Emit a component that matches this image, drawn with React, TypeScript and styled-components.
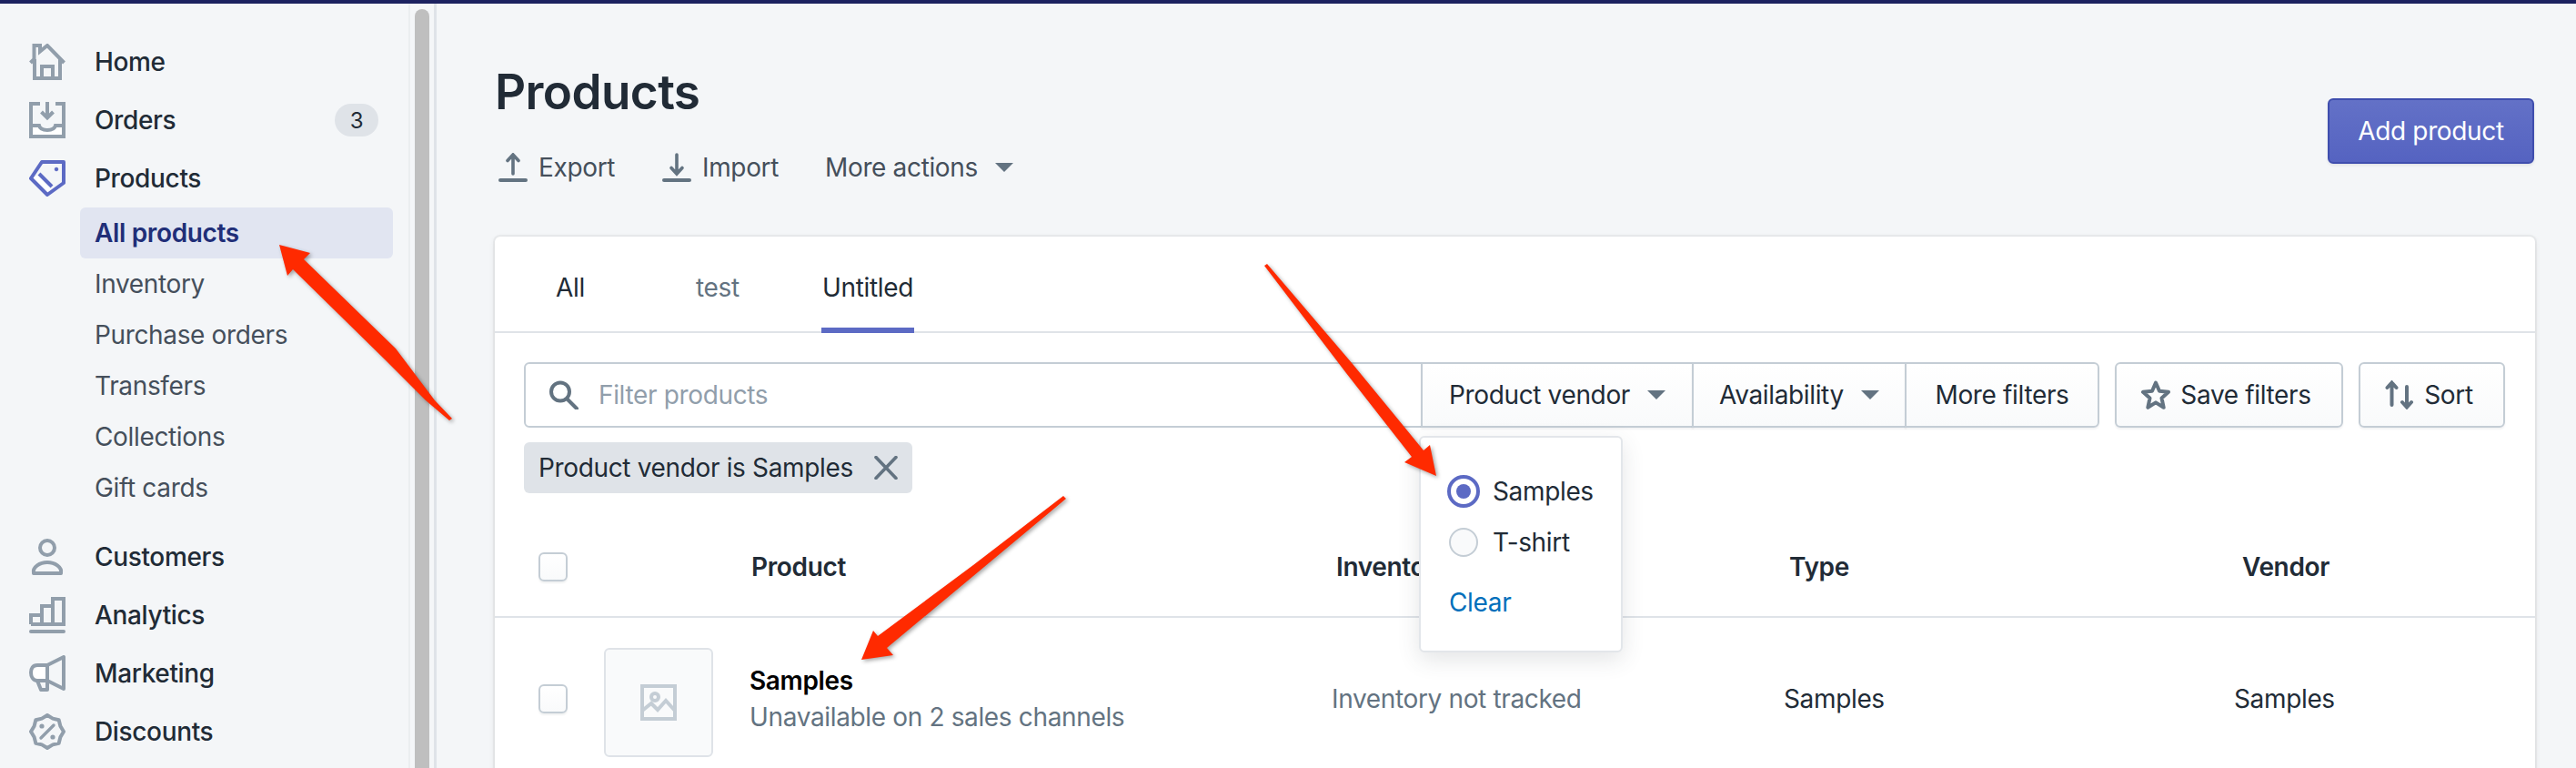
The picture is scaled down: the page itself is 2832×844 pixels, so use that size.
import React from 'react';
import styled, { createGlobalStyle } from 'styled-components';

const GlobalStyle = createGlobalStyle`
  html, body {
    margin: 0;
    padding: 0;
    background: #f4f6f8;
    font-family: 'Inter', 'Liberation Sans', sans-serif;
    font-size: 28px;
    letter-spacing: -0.35px;
    color: #212b36;
  }
`;

const Page = styled.div`
  position: relative;
  width: 2832px;
  height: 844px;
  overflow: hidden;
  border-top: 4px solid #1c2260;
  box-sizing: border-box;
  display: flex;
`;

const Sidebar = styled.aside`
  width: 480px;
  flex: none;
  display: flex;
  border-right: 3px solid #dfe3e8;
  box-sizing: border-box;
`;

const Nav = styled.nav`
  width: 451px;
  flex: none;
  box-sizing: border-box;
  padding: 32px 0 0 32px;
  border-right: 2px solid #ebeef0;
`;

const ScrollTrack = styled.div`
  margin: 6px 0 0 5px;
  width: 16px;
  flex: none;
  background: #bfbfbf;
  border-radius: 8px 8px 0 0;
`;

const NavGroup = styled.div<{ $gap?: number }>`
  margin-top: ${({ $gap }) => $gap ?? 0}px;
`;

const NavItem = styled.div`
  display: flex;
  align-items: center;
  height: 64px;
  width: 384px;
  font-weight: 500;
  svg {
    width: 40px;
    height: 40px;
    margin-right: 32px;
    flex: none;
  }
`;

const Badge = styled.span`
  margin-left: auto;
  width: 48px;
  height: 36px;
  border-radius: 18px;
  background: #dfe3e8;
  font-size: 24px;
  font-weight: 400;
  display: flex;
  align-items: center;
  justify-content: center;
`;

const SubItem = styled.div<{ $active?: boolean }>`
  display: flex;
  align-items: center;
  height: 56px;
  width: 344px;
  margin-left: 56px;
  padding-left: 16px;
  box-sizing: border-box;
  border-radius: 6px;
  color: ${({ $active }) => ($active ? '#202e78' : '#454f5b')};
  font-weight: ${({ $active }) => ($active ? 600 : 400)};
  background: ${({ $active }) => ($active ? '#e1e5f1' : 'transparent')};
`;

const Main = styled.main`
  flex: 1;
  min-width: 0;
  padding: 64px 45px 0 64px;
`;

const Header = styled.header`
  display: flex;
  justify-content: space-between;
  align-items: flex-start;
  height: 192px;
`;

const Title = styled.h1`
  margin: 1px 0 0;
  font-size: 53px;
  line-height: 64px;
  font-weight: 600;
  letter-spacing: -0.6px;
`;

const Toolbar = styled.div`
  display: flex;
  align-items: center;
  height: 40px;
  margin-top: 31px;
`;

const ToolAction = styled.div<{ $width: number }>`
  display: flex;
  align-items: center;
  width: ${({ $width }) => $width}px;
  color: #454f5b;
  svg.tool {
    width: 32px;
    height: 32px;
    margin: 0 12px 0 4px;
  }
  svg.caret {
    width: 20px;
    height: 10px;
    margin-left: 19px;
  }
`;

const PrimaryButton = styled.button`
  margin: 40px 1px 0 0;
  width: 227px;
  height: 72px;
  border: 2px solid #3f4eae;
  border-radius: 6px;
  background: linear-gradient(180deg, #6371c7, #5563c1);
  color: #fff;
  font-family: inherit;
  font-size: 28px;
  letter-spacing: -0.35px;
  box-shadow: 0 2px 3px rgba(22, 29, 37, 0.08);
`;

const Card = styled.section`
  background: #fff;
  border-radius: 6px 6px 0 0;
  height: 600px;
  box-shadow: 0 0 0 2px rgba(63, 63, 68, 0.05), 0 2px 6px rgba(63, 63, 68, 0.12);
`;

const Tabs = styled.div`
  display: flex;
  height: 106px;
  padding-left: 67px;
  border-bottom: 2px solid #dfe3e8;
  box-sizing: border-box;
`;

const Tab = styled.div<{ $active?: boolean; $color?: string; $width?: number }>`
  display: flex;
  align-items: center;
  box-sizing: border-box;
  height: 106px;
  padding: 11px ${({ $active }) => ($active ? '1px' : '0')} 0;
  width: ${({ $width }) => ($width ? `${$width}px` : 'auto')};
  color: ${({ $color }) => $color ?? '#212b36'};
  border-bottom: 6px solid ${({ $active }) => ($active ? '#5c6ac4' : 'transparent')};
`;

const FilterBar = styled.div`
  display: flex;
  gap: 17px;
  padding: 32px 33px 0 32px;
`;

const FilterGroup = styled.div`
  display: flex;
  flex: 1;
  height: 72px;
`;

const SearchField = styled.div`
  flex: 1;
  display: flex;
  align-items: center;
  padding-left: 26px;
  border: 2px solid #c4cdd5;
  border-radius: 6px 0 0 6px;
  color: #919eab;
  svg {
    width: 32px;
    height: 32px;
    margin-right: 22px;
  }
`;

const OutlineButton = styled.div<{ $grouped?: boolean; $last?: boolean; $width: number }>`
  position: relative;
  box-sizing: border-box;
  width: ${({ $width }) => $width}px;
  height: 72px;
  display: flex;
  align-items: center;
  justify-content: center;
  margin-left: ${({ $grouped }) => ($grouped ? '-2px' : '0')};
  padding-right: ${({ $grouped }) => ($grouped ? '0' : '6px')};
  border: 2px solid #c4cdd5;
  border-radius: ${({ $grouped, $last }) => ($grouped ? ($last ? '0 6px 6px 0' : '0') : '6px')};
  background: linear-gradient(180deg, #fff, #f9fafb);
  box-shadow: 0 2px 2px rgba(22, 29, 37, 0.05);
  svg.caret {
    width: 20px;
    height: 10px;
    margin-left: 19px;
  }
  svg.lead {
    width: 32px;
    height: 32px;
    margin-right: 11px;
  }
`;

const Popover = styled.div`
  position: absolute;
  z-index: 2;
  top: 79px;
  left: -4px;
  width: 224px;
  height: 238px;
  box-sizing: border-box;
  padding: 31px 0 0 29px;
  background: #fff;
  border: 2px solid #e3e6ea;
  border-radius: 6px;
  box-shadow: 0 8px 24px rgba(66, 71, 76, 0.14);
`;

const RadioRow = styled.div`
  display: flex;
  align-items: center;
  height: 56px;
  gap: 14px;
`;

const Radio = styled.span<{ $checked?: boolean }>`
  box-sizing: border-box;
  flex: none;
  width: ${({ $checked }) => ($checked ? 36 : 32)}px;
  height: ${({ $checked }) => ($checked ? 36 : 32)}px;
  margin: 0 ${({ $checked }) => ($checked ? 0 : 2)}px;
  border-radius: 50%;
  display: flex;
  align-items: center;
  justify-content: center;
  border: ${({ $checked }) => ($checked ? '4px solid #5c6ac4' : '2px solid #c4cdd5')};
  background: ${({ $checked }) => ($checked ? '#fff' : '#f9fafb')};
  &::after {
    content: '';
    width: 16px;
    height: 16px;
    border-radius: 50%;
    background: ${({ $checked }) => ($checked ? '#5c6ac4' : 'transparent')};
  }
`;

const ClearLink = styled.div`
  margin: 10px 0 0 2px;
  height: 56px;
  display: flex;
  align-items: center;
  color: #006fbb;
`;

const Chip = styled.div`
  display: inline-flex;
  align-items: center;
  height: 56px;
  margin: 16px 0 0 32px;
  padding: 0 16px;
  border-radius: 6px;
  background: #dfe3e8;
  svg {
    width: 26px;
    height: 26px;
    margin-left: 23px;
  }
`;

const Checkbox = styled.span`
  display: block;
  box-sizing: border-box;
  width: 32px;
  height: 32px;
  border: 2px solid #c4cdd5;
  border-radius: 6px;
  background: linear-gradient(180deg, #fff, #f9fafb);
  box-shadow: 0 2px 2px rgba(22, 29, 37, 0.06);
`;

const HeadRow = styled.div`
  display: grid;
  grid-template-columns: 234px 643px 498px 498px 1fr;
  align-items: center;
  box-sizing: border-box;
  height: 137px;
  padding: 26px 0 0 48px;
  border-bottom: 2px solid #dfe3e8;
  font-weight: 600;
`;

const BodyRow = styled.div`
  display: grid;
  grid-template-columns: 72px 160px 640px 497px 495px 1fr;
  grid-template-rows: 112px;
  align-items: center;
  padding: 33px 0 0 48px;
`;

const Thumb = styled.div`
  align-self: start;
  box-sizing: border-box;
  width: 120px;
  height: 120px;
  border: 2px solid #dfe3e8;
  border-radius: 6px;
  background: #f9fafb;
  display: flex;
  align-items: center;
  justify-content: center;
  svg {
    width: 40px;
    height: 40px;
  }
`;

const ProductName = styled.div`
  font-weight: 600;
  color: #000;
  line-height: 40px;
`;

const ProductNote = styled.div`
  color: #637381;
  line-height: 40px;
`;

const MutedCell = styled.div`
  color: #637381;
`;

const Annotations = styled.svg`
  position: absolute;
  z-index: 3;
  top: -4px;
  left: 0;
  width: 2832px;
  height: 844px;
  pointer-events: none;
  filter: drop-shadow(2px 2px 2px rgba(0, 0, 0, 0.35));
`;

const grey = '#919eab';
const slate = '#637381';

const scallop = (() => {
  const pts: string[] = [];
  for (let i = 0; i < 16; i++) {
    const r = i % 2 === 0 ? 18 : 15.6;
    const a = (i * Math.PI) / 8 - Math.PI / 2;
    pts.push(`${(20 + r * Math.cos(a)).toFixed(1)},${(20 + r * Math.sin(a)).toFixed(1)}`);
  }
  return pts.join(' ');
})();

const HomeIcon = () => (
  <svg viewBox="0 0 40 40" fill="none" stroke={grey} strokeWidth="4">
    <path d="M1.5 21 5.5 17V2H12V8.5L20 2 38.5 21" />
    <path d="M6 17V38H34V17" />
    <path d="M14 38V25H26V38" />
  </svg>
);

const OrdersIcon = () => (
  <svg viewBox="0 0 40 40" fill="none" stroke={grey} strokeWidth="4">
    <path d="M2 26H11C12 30 15 31 20 31S28 30 29 26H38V38H2Z" fill="#fff" />
    <path d="M12 2H2V38H38V2H29" />
    <path d="M20 0V17M13.5 11 20 17.5 26.5 11" />
  </svg>
);

const TagIcon = () => (
  <svg viewBox="0 0 40 40" fill="none" stroke="#5c6ac4" strokeWidth="4" strokeLinejoin="round">
    <path d="M2.5 20 11 16 25 30 20 37.5Z" fill="#fff" stroke="none" />
    <path d="M14 2H38V25L20 38 2 20Z" />
    <path d="M11 15 25 29" />
    <circle cx="30" cy="10" r="1.8" fill="#5c6ac4" strokeWidth="1" />
  </svg>
);

const PersonIcon = () => (
  <svg viewBox="0 0 40 40" fill="none" stroke={grey} strokeWidth="4">
    <circle cx="20" cy="10" r="8" />
    <path d="M5 38C3.5 31 12 26 20 26S36.5 31 35 38Z" strokeLinejoin="round" />
  </svg>
);

const ChartIcon = () => (
  <svg viewBox="0 0 40 40" fill="none" stroke={grey} strokeWidth="4">
    <path d="M2 30V20H14V30M14 30V10H26V30M26 30V2H38V30H2" />
    <path d="M2 38H38" strokeLinecap="round" />
  </svg>
);

const MegaphoneIcon = () => (
  <svg viewBox="0 0 40 40" fill="none" stroke={grey} strokeWidth="4" strokeLinejoin="round">
    <path d="M20 11H9C4 11 2 15 2 19S4 28 9 28H20Z" fill="#fff" stroke="none" />
    <path d="M38 2V37L20 28H9C4 28 2 23 2 19S4 11 9 11H20Z" />
    <path d="M20 11V28" />
    <path d="M9 28 13 38H20V28" />
  </svg>
);

const DiscountIcon = () => (
  <svg viewBox="0 0 40 40" fill="none" stroke={grey} strokeWidth="4" strokeLinejoin="round">
    <polygon points={scallop} />
    <path d="M13 27 27 13" strokeWidth="3.4" strokeLinecap="round" />
    <circle cx="14" cy="14" r="2.6" fill={grey} stroke="none" />
    <circle cx="26" cy="26" r="2.6" fill={grey} stroke="none" />
  </svg>
);

const ExportIcon = () => (
  <svg className="tool" viewBox="0 0 32 32" fill="none" stroke={slate} strokeWidth="3.6" strokeLinecap="round">
    <path d="M16 3V23M10 8.5 16 2 22 8.5" />
    <path d="M2 30H30" strokeWidth="4" />
  </svg>
);

const ImportIcon = () => (
  <svg className="tool" viewBox="0 0 32 32" fill="none" stroke={slate} strokeWidth="3.6" strokeLinecap="round">
    <path d="M16 2V22M10 16.5 16 23 22 16.5" />
    <path d="M2 30H30" strokeWidth="4" />
  </svg>
);

const Caret = () => (
  <svg className="caret" viewBox="0 0 20 10">
    <path d="M0 0H20L10 10Z" fill={slate} />
  </svg>
);

const SearchIcon = () => (
  <svg viewBox="0 0 32 32" fill="none" stroke={slate} strokeWidth="4" strokeLinecap="round">
    <circle cx="12" cy="12.5" r="10" />
    <path d="M20 21 30 31" />
  </svg>
);

const CloseIcon = () => (
  <svg viewBox="0 0 26 26" fill="none" stroke={slate} strokeWidth="3.6" strokeLinecap="round">
    <path d="M2 1.5 24 24.5M24 1.5 2 24.5" />
  </svg>
);

const StarIcon = () => (
  <svg className="lead" viewBox="0 0 32 32" fill="none" stroke={slate} strokeWidth="4" strokeLinejoin="round">
    <path d="M16 2.5 20 11.8 30 12.8 22.5 19.5 24.7 29.8 16 24.4 7.3 29.8 9.5 19.5 2 12.8 12 11.8Z" />
  </svg>
);

const SortIcon = () => (
  <svg className="lead" viewBox="0 0 32 32" fill="none" stroke={slate} strokeWidth="4" strokeLinecap="round">
    <path d="M7.5 27V2.5M2.5 8 7.5 2.5 12.5 8" />
    <path d="M24 7V29.5M19 24 24 29.5 29 24" />
  </svg>
);

const ImageIcon = () => (
  <svg viewBox="0 0 40 40" fill="none" stroke="#c4cdd5" strokeWidth="4">
    <rect x="2" y="2" width="36" height="36" />
    <circle cx="16" cy="14" r="4" />
    <path d="M2 29 12 21 19 28 28 18 38 29" />
  </svg>
);

const subLinks = ['Inventory', 'Purchase orders', 'Transfers', 'Collections', 'Gift cards'];

export default function App() {
  return (
    <Page>
      <GlobalStyle />
      <Sidebar>
        <Nav>
          <NavGroup>
            <NavItem><HomeIcon />Home</NavItem>
            <NavItem><OrdersIcon />Orders<Badge>3</Badge></NavItem>
            <NavItem><TagIcon />Products</NavItem>
          </NavGroup>
          <SubItem $active>All products</SubItem>
          {subLinks.map((label) => (
            <SubItem key={label}>{label}</SubItem>
          ))}
          <NavGroup $gap={16}>
            <NavItem><PersonIcon />Customers</NavItem>
            <NavItem><ChartIcon />Analytics</NavItem>
            <NavItem><MegaphoneIcon />Marketing</NavItem>
            <NavItem><DiscountIcon />Discounts</NavItem>
          </NavGroup>
        </Nav>
        <ScrollTrack />
      </Sidebar>
      <Main>
        <Header>
          <div>
            <Title>Products</Title>
            <Toolbar>
              <ToolAction $width={180}><ExportIcon />Export</ToolAction>
              <ToolAction $width={183}><ImportIcon />Import</ToolAction>
              <ToolAction $width={210}>More actions<Caret /></ToolAction>
            </Toolbar>
          </div>
          <PrimaryButton>Add product</PrimaryButton>
        </Header>
        <Card>
          <Tabs>
            <Tab $width={154}>All</Tab>
            <Tab $width={138} $color="#637381">test</Tab>
            <Tab $active>Untitled</Tab>
          </Tabs>
          <FilterBar>
            <FilterGroup>
              <SearchField><SearchIcon />Filter products</SearchField>
              <OutlineButton $grouped $width={300}>
                Product vendor<Caret />
                <Popover>
                  <RadioRow><Radio $checked />Samples</RadioRow>
                  <RadioRow><Radio />T-shirt</RadioRow>
                  <ClearLink>Clear</ClearLink>
                </Popover>
              </OutlineButton>
              <OutlineButton $grouped $width={236}>Availability<Caret /></OutlineButton>
              <OutlineButton $grouped $last $width={214}>More filters</OutlineButton>
            </FilterGroup>
            <OutlineButton $width={251}><StarIcon />Save filters</OutlineButton>
            <OutlineButton $width={161}><SortIcon />Sort</OutlineButton>
          </FilterBar>
          <Chip>Product vendor is Samples<CloseIcon /></Chip>
          <HeadRow>
            <Checkbox />
            <div>Product</div>
            <div>Inventory</div>
            <div>Type</div>
            <div>Vendor</div>
          </HeadRow>
          <BodyRow>
            <Checkbox />
            <Thumb><ImageIcon /></Thumb>
            <div>
              <ProductName>Samples</ProductName>
              <ProductNote>Unavailable on 2 sales channels</ProductNote>
            </div>
            <MutedCell>Inventory not tracked</MutedCell>
            <div>Samples</div>
            <div>Samples</div>
          </BodyRow>
        </Card>
      </Main>
      <Annotations viewBox="0 0 2832 844">
        <polygon fill="#ff2a00" points="307,269 341,278 334,285 435,383 478,440 497,460 494,462 468,440 423,395 322,296 316,303" />
        <polygon fill="#ff2a00" points="1579,523 1544,508 1552,502 1480,410 1390,292 1393,290 1487,400 1565,495 1572,489" />
        <polygon fill="#ff2a00" points="947,725 960,693 965,699 1070,621 1169,545 1172,548 1070,633 975,712 982,720" />
      </Annotations>
    </Page>
  );
}
